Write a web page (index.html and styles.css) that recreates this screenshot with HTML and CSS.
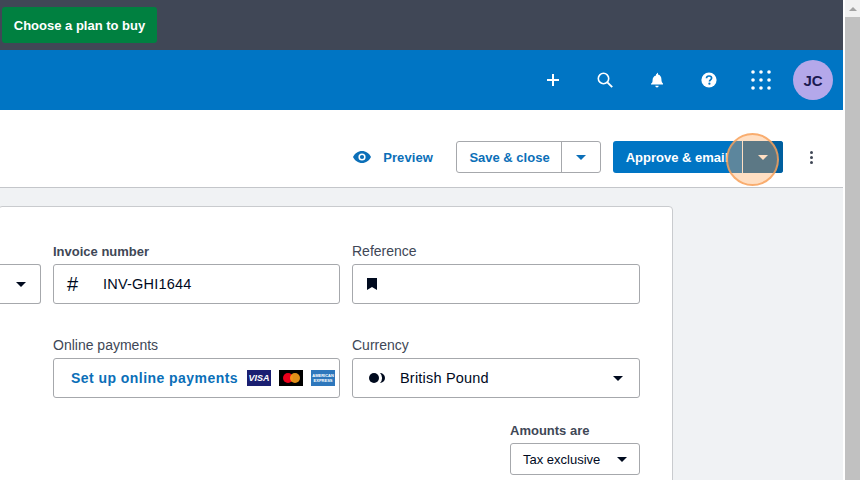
FILE: index.html
```html
<!DOCTYPE html>
<html lang="en">
<head>
<meta charset="utf-8">
<title>Invoice</title>
<link rel="stylesheet" href="styles.css">
</head>
<body>
<div class="window">
  <div class="app">
    <div class="trial-bar"><button class="buy">Choose a plan to buy</button></div>
    <header class="nav">
      <span class="nav-cell"><svg width="16" height="16" viewBox="0 0 16 16"><path d="M8 2v12M2 8h12" stroke="#fff" stroke-width="2"/></svg></span>
      <span class="nav-cell"><svg width="18" height="18" viewBox="0 0 18 18"><circle cx="7.5" cy="7.5" r="5.2" fill="none" stroke="#fff" stroke-width="1.6"/><path d="M11.4 11.4l4.8 4.8" stroke="#fff" stroke-width="1.9"/></svg></span>
      <span class="nav-cell"><svg width="16" height="16" viewBox="0 0 16 16"><path d="M8 .8a1 1 0 0 1 1 1v.6c2.2.5 3.4 2.3 3.4 4.6 0 2.3.5 3.4 1.6 4.6v.9H2v-.9C3.100 11.400 3.600 10.300 3.600 8c0-2.300 1.200-4.100 3.400-4.600v-.6a1 1 0 0 1 1-1z" fill="#fff"/><path d="M6.300 13.700h3.400a1.700 1.700 0 0 1-3.400 0z" fill="#fff"/></svg></span>
      <span class="nav-cell"><svg width="16" height="16" viewBox="0 0 16 16"><circle cx="8" cy="8" r="7.600" fill="#fff"/><path d="M5.500 6.200C5.600 4.700 6.700 4 8 4c1.500 0 2.600.8 2.600 2.100 0 1.800-2.100 1.800-2.100 3.400" fill="none" stroke="#0075c4" stroke-width="1.700"/><circle cx="8.400" cy="11.700" r="1.100" fill="#0075c4"/></svg></span>
      <span class="nav-cell"><svg width="20" height="20" viewBox="0 0 20 20" fill="#fff"><circle cx="2" cy="2" r="1.800"/><circle cx="10" cy="2" r="1.800"/><circle cx="18" cy="2" r="1.800"/><circle cx="2" cy="10" r="1.800"/><circle cx="10" cy="10" r="1.800"/><circle cx="18" cy="10" r="1.800"/><circle cx="2" cy="18" r="1.800"/><circle cx="10" cy="18" r="1.800"/><circle cx="18" cy="18" r="1.800"/></svg></span>
      <span class="avatar">JC</span>
    </header>
    <div class="toolbar">
      <a class="preview">
        <svg width="18" height="12" viewBox="0 0 18 12"><path d="M9 0C5 0 1.800 2.500 0 6c1.800 3.500 5 6 9 6s7.200-2.500 9-6c-1.800-3.500-5-6-9-6z" fill="#0b6fb8"/><circle cx="9" cy="6" r="3.600" fill="#fff"/><circle cx="9" cy="6" r="2.100" fill="#0b6fb8"/></svg>
        <span>Preview</span>
      </a>
      <div class="split split-outline">
        <span class="split-main">Save &amp; close</span>
        <span class="split-arrow"><i class="caret caret-blue"></i></span>
      </div>
      <div class="split split-solid">
        <span class="split-main">Approve &amp; email</span>
        <span class="split-arrow"><i class="caret caret-white"></i></span>
      </div>
      <span class="kebab"><i></i><i></i><i></i></span>
    </div>
    <main class="content">
      <section class="card">
        <div class="row">
          <div class="field"><div class="control control-end"><i class="caret"></i></div></div>
          <div class="field">
            <label class="label label-strong">Invoice number</label>
            <div class="control"><span class="hash">#</span><span class="value">INV-GHI1644</span></div>
          </div>
          <div class="field">
            <label class="label">Reference</label>
            <div class="control">
              <svg class="bookmark" width="10" height="12" viewBox="0 0 10 12"><path d="M0 0h10v12L5 9 0 12z" fill="#000a1e"/></svg>
            </div>
          </div>
        </div>
        <div class="row row-second">
          <div class="field"></div>
          <div class="field">
            <label class="label">Online payments</label>
            <div class="control control-pay">
              <a class="pay-link">Set up online payments</a>
              <span class="brand brand-visa">VISA</span>
              <span class="brand brand-mc"><i class="mc-red"></i><i class="mc-amber"></i></span>
              <span class="brand brand-amex">AMERICAN<br>EXPRESS</span>
            </div>
          </div>
          <div class="field">
            <label class="label">Currency</label>
            <div class="control">
              <svg class="coin" width="16" height="10" viewBox="0 0 16 10"><circle cx="5" cy="5" r="5" fill="#000a1e"/><path d="M11 0a5 5 0 0 1 0 10 7 7 0 0 0 0-10z" fill="#000a1e"/></svg>
              <span class="value value-currency">British Pound</span>
              <i class="caret caret-push"></i>
            </div>
          </div>
        </div>
        <div class="amounts">
          <label class="label label-strong">Amounts are</label>
          <div class="control control-small"><span>Tax exclusive</span><i class="caret"></i></div>
        </div>
      </section>
    </main>
  </div>
  <aside class="scrollbar"><span class="scroll-up"></span><span class="scroll-thumb"></span></aside>
  <span class="highlight"></span>
</div>
</body>
</html>
```
FILE: styles.css
```css
* { box-sizing: border-box; }
html, body { margin: 0; height: 100%; overflow: hidden; background: #fff; }
body { font-family: "Liberation Sans", Arial, sans-serif; color: #000a1e; }

.window { position: relative; display: flex; height: 480px; width: 860px; overflow: hidden; }
.app { width: 843px; display: flex; flex-direction: column; height: 480px; }

.scrollbar { margin-left: 2px; width: 15px; background: #f1f1f1; display: flex; flex-direction: column; }
.scroll-up { height: 17px; display: flex; align-items: center; justify-content: center; }
.scroll-up::before { content: ""; border: 4px solid transparent; border-top: 0; border-bottom: 4px solid #a3a3a3; }
.scroll-thumb { flex: 1; background: #c1c1c1; }

.trial-bar { height: 50px; background: #404756; padding: 7px 2px; }
.buy { display: block; width: 155px; height: 36px; border: 0; border-radius: 3px; background: #008040; color: #fff; font: bold 13px "Liberation Sans", Arial, sans-serif; padding: 0; }

.nav { height: 60px; background: #0075c4; display: flex; align-items: center; justify-content: flex-end; gap: 12px; padding-right: 10px; }
.nav-cell { width: 40px; display: flex; justify-content: center; align-items: center; }
.avatar { width: 40px; height: 40px; border-radius: 50%; background: #b4a8ea; color: #1c1a52; font-size: 15px; font-weight: bold; display: flex; align-items: center; justify-content: center; }

.toolbar { height: 78px; border-bottom: 1px solid #c4c6ca; background: #fff; display: flex; align-items: flex-start; justify-content: flex-end; padding: 31px 20px 0 0; }
.preview { display: flex; align-items: center; gap: 12px; height: 32px; margin-right: 23px; color: #0b6fb8; font-size: 13px; font-weight: bold; letter-spacing: .1px; }
.split { display: flex; height: 32px; border-radius: 3px; font-size: 13px; font-weight: bold; overflow: hidden; }
.split-outline { width: 145px; border: 1px solid #a6a8ac; color: #0b6fb8; margin-right: 12px; }
.split-outline .split-main { width: 105px; border-right: 1px solid #a6a8ac; padding-left: 1px; }
.split-outline .split-arrow { flex: 1; }
.split-solid { width: 170px; background: #0075c4; color: #fff; margin-right: 16px; }
.split-solid .split-main { width: 130px; border-right: 1px solid #fff; padding-right: 1px; }
.split-solid .split-arrow { flex: 1; background: #005f9f; }
.split-main, .split-arrow { display: flex; align-items: center; justify-content: center; }
.kebab { width: 24px; height: 32px; display: flex; flex-direction: column; align-items: center; justify-content: center; gap: 2px; }
.kebab i { width: 3px; height: 3px; border-radius: 50%; background: #404756; }

.caret { display: block; width: 0; height: 0; border: 5px solid transparent; border-top: 5px solid #000a1e; border-bottom: 0; }
.caret-blue { border-top-color: #0b6fb8; }
.caret-white { border-top-color: #fff; }

.content { flex: 1; background: #f0f2f4; padding-top: 18px; min-height: 0; }
.card { width: 675px; margin-left: -2px; height: 400px; background: #fff; border: 1px solid #c9cbce; border-radius: 4px; padding: 37px 32px 0 0; }
.row { display: grid; grid-template-columns: 42px 287px 288px; column-gap: 12px; align-items: end; }
.row-second { margin-top: 34px; }
.label { display: block; height: 16px; line-height: 14px; margin-bottom: 4px; font-size: 14px; color: #404756; }
.label-strong { font-size: 13px; line-height: 16px; font-weight: bold; }
.control { height: 40px; border: 1px solid #a6a8ac; border-radius: 3px; background: #fff; display: flex; align-items: center; padding: 0 14px; font-size: 14px; }
.control-end { justify-content: flex-end; padding-right: 14px; border-left: 0; border-radius: 0 3px 3px 0; }
.hash { width: 36px; margin-left: -1px; font-size: 20px; line-height: 1; }
.value { font-size: 14.500px; letter-spacing: .2px; }
.coin { margin-left: 2px; }
.value-currency { margin-left: 15px; }
.caret-push { margin-left: auto; margin-right: 2px; }

.control-pay { padding: 0 4px 0 17px; gap: 8px; }
.pay-link { color: #0b6fb8; font-weight: bold; font-size: 14px; letter-spacing: .45px; margin-right: 1px; white-space: nowrap; }
.brand { width: 24px; height: 16px; flex: none; display: flex; align-items: center; justify-content: center; overflow: hidden; color: #fff; text-align: center; }
.brand-visa { background: #1a1f71; font-size: 9px; font-weight: bold; font-style: italic; }
.brand-mc { background: #000; }
.mc-red, .mc-amber { display: block; width: 10px; height: 10px; border-radius: 50%; }
.mc-red { background: #eb001b; }
.mc-amber { background: #f79e1b; margin-left: -3px; opacity: .9; }
.brand-amex { background: #2e77bc; font-size: 4px; line-height: 5px; font-weight: bold; }

.amounts { width: 130px; margin: 25px 0 0 511px; }
.control-small { height: 32px; padding: 0 12px 0 12px; font-size: 13px; justify-content: space-between; }

.highlight { position: absolute; left: 726px; top: 133px; width: 53px; height: 53px; border-radius: 50%; background: rgba(255, 165, 90, .36); border: 2px solid rgba(247, 160, 90, .8); }
```
